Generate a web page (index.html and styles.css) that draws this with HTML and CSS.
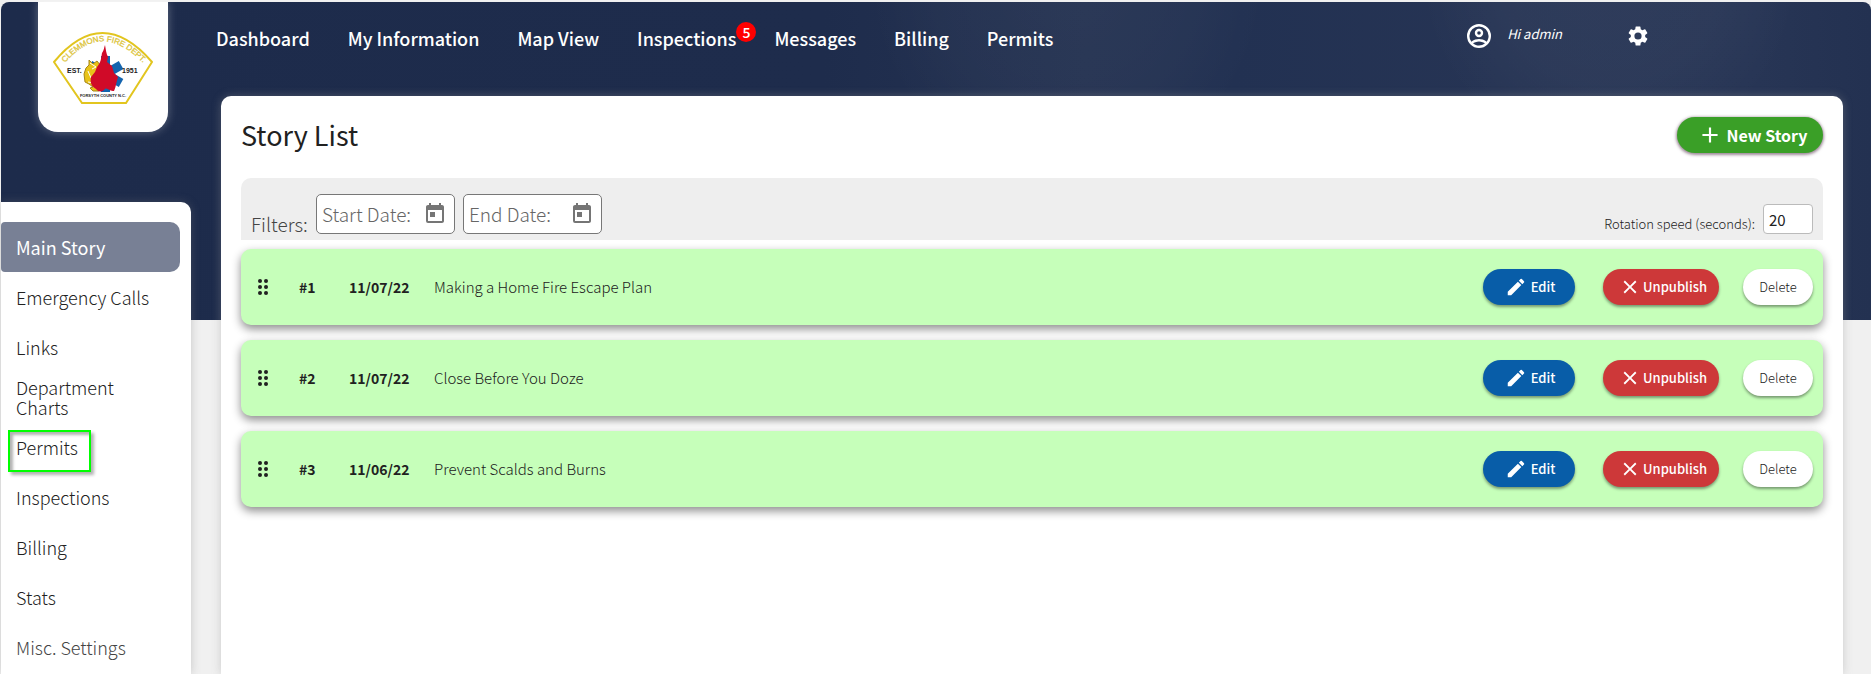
FILE: index.html
```html
<!DOCTYPE html>
<html lang="en">
<head>
<meta charset="utf-8">
<title>Story List</title>
<link rel="stylesheet" href="styles.css">
</head>
<body>
<svg class="sprite" aria-hidden="true">
  <symbol id="i-drag" viewBox="0 0 10 16"><circle cx="2" cy="2" r="2"/><circle cx="8" cy="2" r="2"/><circle cx="2" cy="8" r="2"/><circle cx="8" cy="8" r="2"/><circle cx="2" cy="14" r="2"/><circle cx="8" cy="14" r="2"/></symbol>
  <symbol id="i-edit" viewBox="0 0 24 24"><path d="M3 17.25V21h3.750L17.810 9.940l-3.750-3.750L3 17.250zM20.710 7.040a1 1 0 0 0 0-1.410l-2.340-2.340a1 1 0 0 0-1.410 0l-1.830 1.830 3.750 3.750 1.830-1.830z"/></symbol>
  <symbol id="i-close" viewBox="0 0 24 24"><path d="M19 6.41 17.590 5 12 10.590 6.410 5 5 6.410 10.590 12 5 17.590 6.410 19 12 13.410 17.590 19 19 17.590 13.410 12z"/></symbol>
  <symbol id="i-add" viewBox="0 0 24 24"><path d="M19 13h-6v6h-2v-6H5v-2h6V5h2v6h6v2z"/></symbol>
  <symbol id="i-today" viewBox="0 0 24 24"><path d="M19 3h-1V1h-2v2H8V1H6v2H5c-1.11 0-1.99.9-1.99 2L3 19a2 2 0 0 0 2 2h14c1.1 0 2-.9 2-2V5c0-1.1-.9-2-2-2zm0 16H5V8h14v11zM7 10h5v5H7z"/></symbol>
  <symbol id="i-user" viewBox="0 0 24 24"><path fill-rule="evenodd" d="M12 0a12 12 0 1 0 0 24 12 12 0 0 0 0-24zM6.100 19.540c.51-1.080 3.660-2.140 5.900-2.140s5.400 1.060 5.900 2.140A9.570 9.570 0 0 1 12 21.600c-2.230 0-4.280-.77-5.900-2.060zm13.520-1.750C17.900 15.700 13.740 15 12 15s-5.900.7-7.620 2.790A9.560 9.560 0 0 1 2.400 12 9.610 9.610 0 0 1 12 2.400 9.610 9.610 0 0 1 21.600 12c0 2.180-.74 4.190-1.980 5.790zM12 4.800a4.190 4.190 0 1 0 0 8.400 4.190 4.190 0 0 0 0-8.400zm0 6a1.800 1.800 0 1 1 0-3.600 1.800 1.800 0 0 1 0 3.600z"/></symbol>
  <symbol id="i-gear" viewBox="0 0 24 24"><path d="M19.14 12.94c.04-.3.06-.61.06-.94 0-.32-.02-.64-.07-.94l2.030-1.580a.49.49 0 0 0 .12-.61l-1.920-3.320a.49.49 0 0 0-.59-.22l-2.390.96a7 7 0 0 0-1.620-.94l-.36-2.540A.48.48 0 0 0 13.920 2.400h-3.840a.47.47 0 0 0-.47.41l-.36 2.540c-.59.24-1.130.57-1.620.94l-2.390-.96a.48.48 0 0 0-.59.22L2.740 8.870a.47.47 0 0 0 .12.61l2.030 1.580c-.05.3-.09.63-.09.94s.02.64.07.94l-2.030 1.580a.49.49 0 0 0-.12.61l1.920 3.320c.12.22.37.29.59.22l2.390-.96c.5.38 1.030.7 1.620.94l.36 2.540c.05.24.24.41.48.41h3.840c.24 0 .44-.17.47-.41l.36-2.540c.59-.24 1.130-.56 1.620-.94l2.390.96c.22.08.47 0 .59-.22l1.920-3.320a.47.47 0 0 0-.12-.61l-2.010-1.580zM12 15.600a3.600 3.600 0 1 1 0-7.200 3.600 3.600 0 0 1 0 7.200z"/></symbol>
</svg>

<div class="page">
  <div class="left">
    <a class="logo" href="#" aria-label="Clemmons Fire Dept.">
      <svg viewBox="0 0 100 72" width="100" height="72">
        <path class="shield" d="M1 30Q49-28 99 30L73 71H29Z"/>
        <path id="arc" fill="none" d="M11 32Q49-13 91 32"/>
        <text class="arc-text"><textPath href="#arc" startOffset="50%" text-anchor="middle">CLEMMONS FIRE DEPT.</textPath></text>
        <g class="star"><path d="M48 24h9v36h-9z"/><path d="M48 24h9v36h-9z" transform="rotate(60 52.500 42)"/><path d="M48 24h9v36h-9z" transform="rotate(120 52.500 42)"/></g>
        <path class="badge-gold" d="M36 28l4 4 4-3 4 5-2 25h-6l-3-3 3-1-4-3-4-2-1-8 2-6 3-3z"/>
        <path class="badge-line" d="M37 31l6 4-4 2m-4 2l3 7m-3 4l6 1"/>
        <path class="flame" d="M52 13c1 5 1 8 3 12l-1 5 5 4 2 7 4 4c-2 6-2 10-4 14-5 1-7-5-10-1-4 3-6 1-8-1-5-3-6-7-5-12l4-5 2-5c4-5 4-8 5-14 2-3 2-5 3-8z"/>
        <text class="logo-est" x="14" y="41">EST.</text>
        <text class="logo-est" x="69" y="41">1951</text>
        <text class="logo-county" x="50" y="65" text-anchor="middle">FORSYTH COUNTY N.C.</text>
      </svg>
    </a>
    <nav class="side" aria-label="Section">
      <a class="active" href="#">Main Story</a>
      <a href="#">Emergency Calls</a>
      <a href="#">Links</a>
      <a href="#">Department Charts</a>
      <a class="marked" href="#">Permits</a>
      <a href="#">Inspections</a>
      <a href="#">Billing</a>
      <a href="#">Stats</a>
      <a class="muted" href="#">Misc. Settings</a>
    </nav>
  </div>

  <div class="right">
    <header class="top">
      <nav class="menu" aria-label="Main">
        <a href="#">Dashboard</a>
        <a href="#">My Information</a>
        <a href="#">Map View</a>
        <a href="#">Inspections<span class="count">5</span></a>
        <a href="#">Messages</a>
        <a href="#">Billing</a>
        <a href="#">Permits</a>
      </nav>
      <div class="account">
        <svg class="user"><use href="#i-user"/></svg>
        <span class="hello">Hi admin</span>
        <button class="gear" type="button" aria-label="Settings"><svg><use href="#i-gear"/></svg></button>
      </div>
    </header>

    <main class="panel">
      <div class="title-row">
        <h1>Story List</h1>
        <button class="pill new" type="button"><svg><use href="#i-add"/></svg>New Story</button>
      </div>
      <div class="filters">
        <span class="filters-label">Filters:</span>
        <div class="date"><input type="text" placeholder="Start Date:" aria-label="Start Date"><button type="button" aria-label="Pick start date"><svg><use href="#i-today"/></svg></button></div>
        <div class="date"><input type="text" placeholder="End Date:" aria-label="End Date"><button type="button" aria-label="Pick end date"><svg><use href="#i-today"/></svg></button></div>
        <label class="speed-label" for="speed">Rotation speed (seconds):</label>
        <input class="speed" id="speed" type="text" value="20">
      </div>
      <ul class="stories">
        <li>
          <svg class="drag"><use href="#i-drag"/></svg><b class="num">#1</b><b class="day">11/07/22</b><span class="name">Making a Home Fire Escape Plan</span>
          <button class="pill edit" type="button"><svg><use href="#i-edit"/></svg>Edit</button>
          <button class="pill unpublish" type="button"><svg><use href="#i-close"/></svg>Unpublish</button>
          <button class="pill delete" type="button">Delete</button>
        </li>
        <li>
          <svg class="drag"><use href="#i-drag"/></svg><b class="num">#2</b><b class="day">11/07/22</b><span class="name">Close Before You Doze</span>
          <button class="pill edit" type="button"><svg><use href="#i-edit"/></svg>Edit</button>
          <button class="pill unpublish" type="button"><svg><use href="#i-close"/></svg>Unpublish</button>
          <button class="pill delete" type="button">Delete</button>
        </li>
        <li>
          <svg class="drag"><use href="#i-drag"/></svg><b class="num">#3</b><b class="day">11/06/22</b><span class="name">Prevent Scalds and Burns</span>
          <button class="pill edit" type="button"><svg><use href="#i-edit"/></svg>Edit</button>
          <button class="pill unpublish" type="button"><svg><use href="#i-close"/></svg>Unpublish</button>
          <button class="pill delete" type="button">Delete</button>
        </li>
      </ul>
    </main>
  </div>
</div>
</body>
</html>
```
FILE: styles.css
```css
*, *::before, *::after { box-sizing: border-box; }

body {
  margin: 0;
  padding: 2px 0 0 1px;
  background: #f0f0f0;
  color: #212121;
  font-family: "Noto Sans CJK SC", "Noto Sans", sans-serif;
  font-size: 18px;
  font-weight: 300;
  line-height: 20px;
}

a { color: inherit; text-decoration: none; }
button, input { font: inherit; color: inherit; }
button { border: 0; padding: 0; background: none; cursor: pointer; }
svg { display: block; flex: none; fill: currentColor; }
.sprite { display: none; }

.page {
  display: flex;
  gap: 30px;
  min-height: calc(100vh - 2px);
  padding-right: 28px;
  border-radius: 8px 8px 0 0;
  background:
    radial-gradient(circle at 86% -30px, rgba(255, 255, 255, .04) 0, rgba(255, 255, 255, .03) 110px, rgba(255, 255, 255, 0) 190px) 0 0 / 100% 318px no-repeat,
    radial-gradient(circle at 57% -20px, rgba(255, 255, 255, .03) 0, rgba(255, 255, 255, .02) 130px, rgba(255, 255, 255, 0) 200px) 0 0 / 100% 318px no-repeat,
    linear-gradient(90deg, #1d2b4b 0, #1e2c4c 44%, #253352 58%, #223152 66%, #263454 80%, #273555 94%, #233151 100%) 0 0 / 100% 318px no-repeat;
}

.left {
  display: flex;
  flex: none;
  flex-direction: column;
  gap: 70px;
  width: 190px;
}

.logo {
  display: flex;
  align-items: center;
  justify-content: center;
  width: 130px;
  height: 130px;
  margin-left: 37px;
  padding-top: 2px;
  border-radius: 0 0 20px 20px;
  background: #fff;
  box-shadow: 0 0 10px rgba(255, 255, 255, .3);
}
.shield { fill: #fff; stroke: #e2c51f; stroke-width: 2; }
.arc-text { fill: #dcc43a; stroke: #dcc43a; stroke-width: .3; font: 8px "Liberation Sans", sans-serif; }
.star { fill: #1464ae; }
.badge-gold { fill: #e8c319; stroke: #a5871c; stroke-width: 1; }
.badge-line { fill: none; stroke: #fff; stroke-width: 1; }
.flame { fill: #d00a28; }
.logo-est { font: bold 7px "Liberation Sans", sans-serif; }
.logo-county { font: bold 4px "Liberation Sans", sans-serif; }

.side {
  flex: 1;
  padding: 20px 11px 0 0;
  border-radius: 0 10px 0 0;
  background: #fff;
  box-shadow: 0 0 10px rgba(120, 120, 120, .35);
}
.side a {
  position: relative;
  display: flex;
  align-items: center;
  height: 50px;
  padding: 0 30px 0 15px;
  border-radius: 4px 10px 10px 4px;
}
.side .active { background: #788095; color: #fff; font-weight: 400; }
.side .muted { color: #444; }
.side .marked::after {
  content: "";
  position: absolute;
  left: 7px;
  top: 8px;
  width: 83px;
  height: 42px;
  border: 2px solid #0f0;
  box-shadow: 3px 3px 3px rgba(0, 0, 0, .3), inset 3px 3px 3px rgba(0, 0, 0, .3);
}

.right { display: flex; flex: 1; flex-direction: column; min-width: 0; }

.top {
  display: flex;
  align-items: flex-start;
  justify-content: space-between;
  height: 94px;
  padding: 22px 193px 0 0;
  color: #fff;
}
.menu { display: flex; gap: 38px; margin-left: -5px; padding-top: 4px; font-weight: 500; }
.menu a { position: relative; }
.count {
  position: absolute;
  top: -6px;
  left: 100%;
  width: 20px;
  height: 20px;
  border-radius: 50%;
  background: #f00;
  font-size: 14px;
  text-align: center;
}
.account { display: flex; align-items: center; height: 24px; }
.user { width: 24px; height: 24px; margin-right: 16px; }
.hello { margin: 0 64px 5px 0; font-size: 13px; font-style: italic; font-weight: 400; }
.gear svg { width: 24px; height: 24px; }

.panel {
  flex: 1;
  padding: 20px;
  border-radius: 10px 10px 0 0;
  background: #fff;
  box-shadow: 0 0 10px rgba(150, 150, 150, .4);
}
.title-row { display: flex; align-items: center; justify-content: space-between; margin-bottom: 24px; }
h1 { margin: 0; font-size: 27px; font-weight: 400; line-height: 38px; }

.pill {
  display: flex;
  align-items: center;
  justify-content: center;
  height: 36px;
  border-radius: 18px;
  box-shadow: 0 2px 3px rgba(0, 0, 0, .4);
  color: #fff;
  font-size: 13px;
  font-weight: 500;
}
.pill svg { width: 22px; height: 22px; }
.new { gap: 4px; width: 146px; padding-left: 4px; background: #3a9f27; box-shadow: 0 1px 3px 1px rgba(60, 20, 50, .5); font-size: 16px; font-weight: 700; }
.new svg { width: 26px; height: 26px; }
.edit { gap: 4px; width: 92px; padding-left: 2px; margin-right: 28px; background: #085da8; }
.unpublish { gap: 2px; width: 116px; padding-left: 4px; margin-right: 24px; background: #cd3839; }
.delete { width: 70px; background: #fff; color: #222; font-weight: 300; }

.filters {
  display: flex;
  align-items: flex-end;
  height: 62px;
  padding: 0 10px 6px;
  border-radius: 10px 10px 0 0;
  background: #eee;
}
.filters-label { margin-right: 8px; color: #444; font-size: 19px; }
.date {
  display: flex;
  align-items: center;
  width: 139px;
  height: 40px;
  margin-right: 8px;
  padding: 0 7px 0 5px;
  border: 1px solid #777;
  border-radius: 5px;
  background: #fff;
  color: #757575;
}
.date input { flex: 1; min-width: 0; padding: 0; border: 0; background: none; font-size: 19px; }
.date input::placeholder { color: #666; opacity: 1; }
.date svg { width: 24px; height: 24px; }
.speed-label { margin: 0 8px 0 auto; font-size: 13px; }
.speed { width: 50px; height: 30px; padding: 0 5px; border: 1px solid #bbb; border-radius: 4px; background: #fff; font-size: 15px; font-weight: 400; }

.stories { display: grid; gap: 15px; margin: 9px 0 0; padding: 0; list-style: none; font-size: 14px; }
.stories li {
  display: flex;
  align-items: center;
  height: 76px;
  padding: 0 10px 0 17px;
  border-radius: 10px;
  background: #c6ffba;
  box-shadow: 0 4px 10px rgba(0, 0, 0, .45);
}
.drag { width: 10px; height: 16px; }
b { font-weight: 700; }
.num { width: 50px; margin-left: 31px; }
.day { width: 85px; }
.name { flex: 1; font-size: 15px; }
```
